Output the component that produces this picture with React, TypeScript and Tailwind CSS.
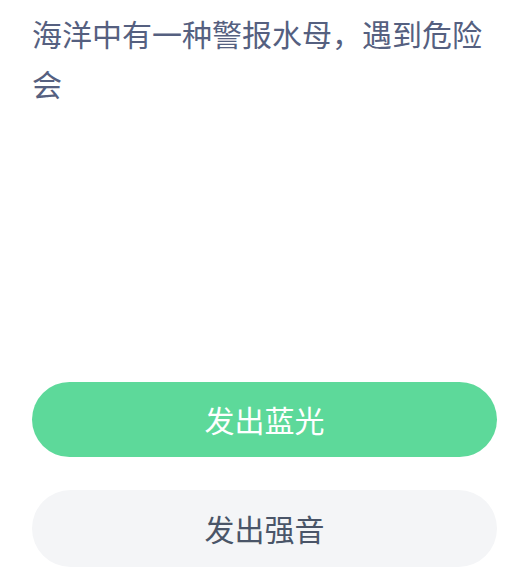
export default function App() {
  return (
    <div
      className="flex h-[575px] w-[521px] flex-col bg-white pl-8 pr-6 pt-[8px]"
      style={{ fontFamily: '"Noto Sans CJK SC", "Noto Sans", sans-serif' }}
    >
      <p className="pr-2 text-[30px] leading-[50px] text-[#556080]">
        海洋中有一种警报水母，遇到危险会
      </p>

      <div className="mt-auto mb-[8px] flex flex-col gap-[33px]">
        <button className="flex h-[75px] w-full items-center justify-center rounded-full bg-[#5dd99a] text-[30px] text-white">
          发出蓝光
        </button>
        <button className="flex h-[77px] w-full items-center justify-center rounded-full bg-[#f4f5f7] text-[30px] text-[#4a5568]">
          发出强音
        </button>
      </div>
    </div>
  );
}
